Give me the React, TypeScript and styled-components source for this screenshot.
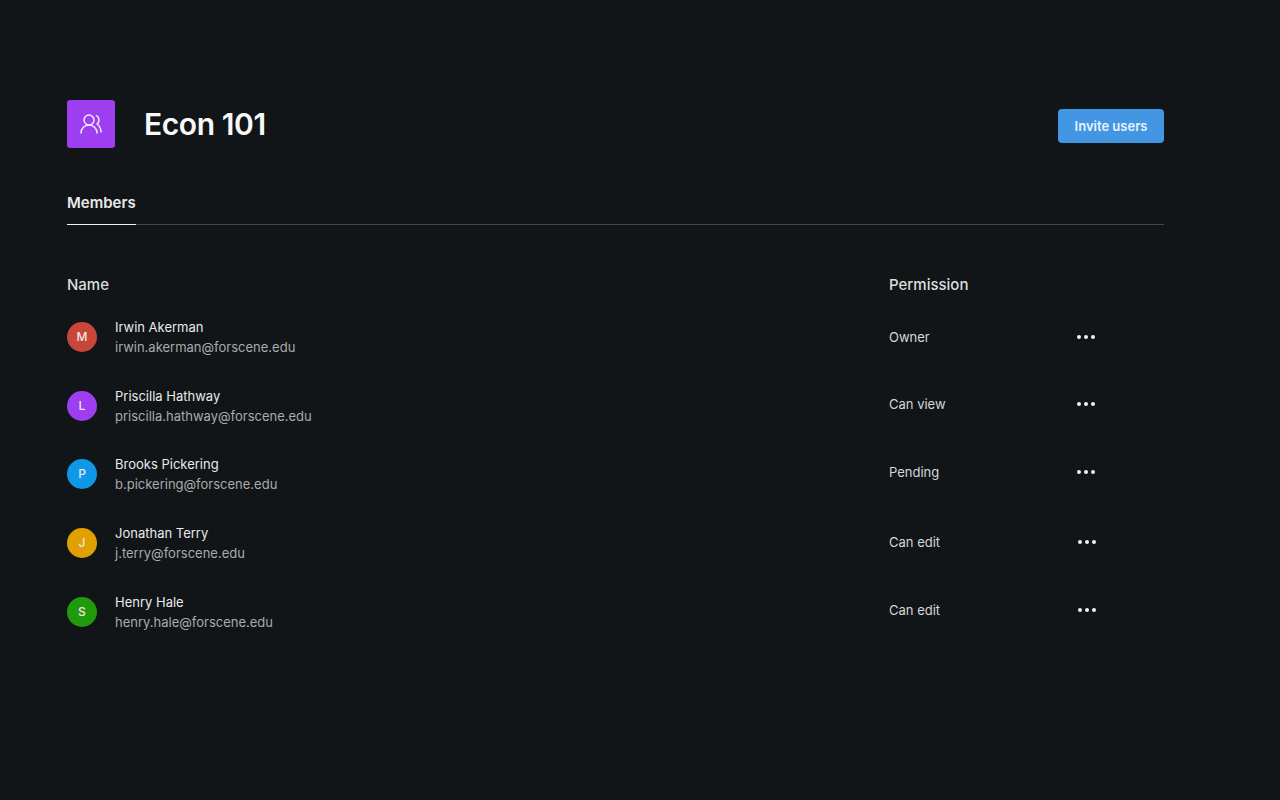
import React from "react";
import styled, { createGlobalStyle } from "styled-components";
import { UsersRound } from "lucide-react";

const Global = createGlobalStyle`
  html, body { margin: 0; padding: 0; background: #111518; }
  body { font-family: Inter, "Liberation Sans", sans-serif; }
`;

const Page = styled.div`
  width: 1280px;
  height: 800px;
  box-sizing: border-box;
  padding: 100px 116px 0 67px;
  background: #111518;
  overflow: hidden;
`;

const Header = styled.header`
  display: flex;
  align-items: center;
  height: 48px;
`;

const Badge = styled.div`
  width: 48px;
  height: 48px;
  border-radius: 3px;
  background: #9d3ff0;
  color: #f4e8ff;
  display: flex;
  align-items: center;
  justify-content: center;
`;

const Title = styled.h1`
  margin: 0 0 0 29px;
  font-size: 30px;
  line-height: 44px;
  font-weight: 600;
  letter-spacing: -0.4px;
  color: #f7f8f8;
  flex: 1;
`;

const InviteButton = styled.button`
  width: 106px;
  height: 34px;
  margin-top: 3px;
  border: 0;
  border-radius: 4px;
  background: #4296e4;
  color: #e8f3fd;
  font: 600 13px/34px Inter, "Liberation Sans", sans-serif;
  padding: 0;
`;

const Tabs = styled.nav`
  margin-top: 43px;
  height: 33px;
  border-bottom: 1px solid #43474a;
  display: flex;
`;

const Tab = styled.div`
  height: 33px;
  box-sizing: content-box;
  border-bottom: 1px solid #f2f3f3;
  font-size: 15px;
  line-height: 24px;
  padding-top: 0;
  font-weight: 600;
  color: #e9eaea;
`;

const TableHead = styled.div`
  display: grid;
  grid-template-columns: 822px 1fr;
  margin-top: 49px;
  height: 22px;
  font-size: 15px;
  line-height: 22px;
  font-weight: 500;
  color: #dcdddd;
`;

const Row = styled.div<{ $height: number }>`
  display: grid;
  grid-template-columns: 822px 188px auto;
  justify-content: start;
  align-items: center;
  height: ${(p) => p.$height}px;
`;

const Person = styled.div`
  display: flex;
  align-items: center;
`;

const Avatar = styled.div<{ $color: string }>`
  width: 30px;
  height: 30px;
  border-radius: 50%;
  background: ${(p) => p.$color};
  color: #f0e6e6;
  font-size: 12px;
  font-weight: 500;
  line-height: 30px;
  text-align: center;
  margin-right: 18px;
`;

const Details = styled.div`
  display: flex;
  flex-direction: column;
  gap: 4px;
`;

const Name = styled.div`
  font-size: 13px;
  line-height: 16px;
  color: #e9eaea;
`;

const Email = styled.div`
  font-size: 13px;
  line-height: 16px;
  color: #a9abac;
`;

const Permission = styled.div<{ $lift: number }>`
  font-size: 13px;
  line-height: 18px;
  color: #d6d7d8;
  padding-bottom: ${(p) => p.$lift}px;
`;

const More = styled.div<{ $lift: number; $nudge: number }>`
  display: flex;
  gap: 3px;
  padding-bottom: ${(p) => p.$lift}px;
  margin-left: ${(p) => p.$nudge}px;
`;

const Dot = styled.span`
  width: 4px;
  height: 4px;
  border-radius: 50%;
  background: #f0f1f1;
`;

const RowsWrap = styled.div`
  margin-top: 6px;
`;

const members = [
  { i: "M", c: "#c9463a", n: "Irwin Akerman", e: "irwin.akerman@forscene.edu", p: "Owner", h: 70, l: 0, x: 0 },
  { i: "L", c: "#9d3ff0", n: "Priscilla Hathway", e: "priscilla.hathway@forscene.edu", p: "Can view", h: 68, l: 4, x: 0 },
  { i: "P", c: "#0d99e8", n: "Brooks Pickering", e: "b.pickering@forscene.edu", p: "Pending", h: 68, l: 4, x: 0 },
  { i: "J", c: "#e0a100", n: "Jonathan Terry", e: "j.terry@forscene.edu", p: "Can edit", h: 70, l: 2, x: 1 },
  { i: "S", c: "#1f9a0c", n: "Henry Hale", e: "henry.hale@forscene.edu", p: "Can edit", h: 68, l: 4, x: 1 },
];

export default function App() {
  return (
    <Page>
      <Global />
      <Header>
        <Badge>
          <UsersRound size={24} strokeWidth={1.5} />
        </Badge>
        <Title>Econ 101</Title>
        <InviteButton>Invite users</InviteButton>
      </Header>
      <Tabs>
        <Tab>Members</Tab>
      </Tabs>
      <TableHead>
        <div>Name</div>
        <div>Permission</div>
      </TableHead>
      <RowsWrap>
        {members.map((m) => (
          <Row key={m.n} $height={m.h}>
            <Person>
              <Avatar $color={m.c}>{m.i}</Avatar>
              <Details>
                <Name>{m.n}</Name>
                <Email>{m.e}</Email>
              </Details>
            </Person>
            <Permission $lift={m.l}>{m.p}</Permission>
            <More $lift={m.l} $nudge={m.x}>
              <Dot />
              <Dot />
              <Dot />
            </More>
          </Row>
        ))}
      </RowsWrap>
    </Page>
  );
}
